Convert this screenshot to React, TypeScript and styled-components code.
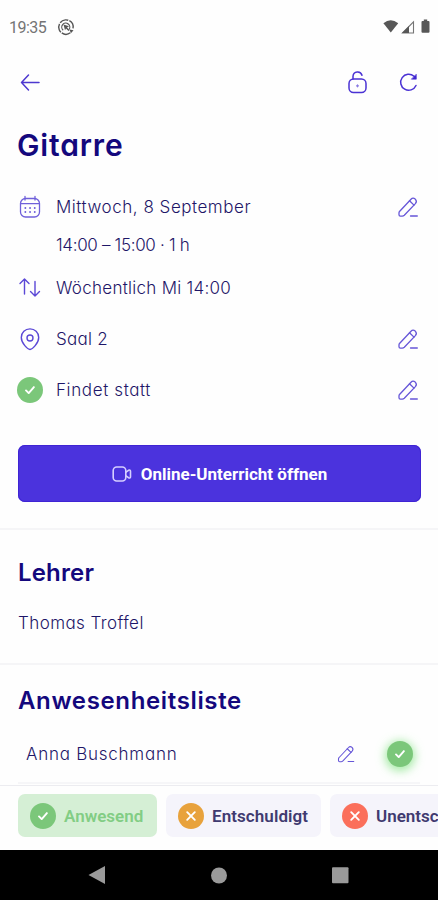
import React from 'react';
import styled, { createGlobalStyle } from 'styled-components';

const GlobalStyle = createGlobalStyle`
  * { box-sizing: border-box; }
  body { margin: 0; background: #fefefe; }
  button { border: 0; background: none; padding: 0; margin: 0; font: inherit; }
  svg { display: block; flex: none; overflow: visible; }
`;

const Screen = styled.div`
  width: 438px;
  height: 900px;
  display: flex;
  flex-direction: column;
  overflow: hidden;
  background: #fefefe;
  color: #1e1668;
  font-family: Inter, 'Open Sans', sans-serif;
  font-feature-settings: 'cv11' 1;
  white-space: nowrap;
`;

const StatusBar = styled.div`
  height: 54px;
  flex: none;
  display: flex;
  align-items: center;
  padding: 0 7px 0 9px;
  color: #747474;
  font: 400 16px Roboto, sans-serif;
  letter-spacing: -0.5px;
`;

const StatusIcon = styled.span`
  margin-left: 12px;
`;

const StatusRight = styled.div`
  margin-left: auto;
  display: flex;
  align-items: center;
`;

const AppBar = styled.header`
  height: 56px;
  flex: none;
  display: flex;
  align-items: center;
  justify-content: space-between;
  padding: 0 18px;
`;

const Actions = styled.div`
  display: flex;
  gap: 27px;
`;

const IconButton = styled.button`
  width: 24px;
  height: 24px;
  display: grid;
  place-items: center;
`;

const Content = styled.main`
  flex: 1;
  min-height: 0;
  overflow: hidden;
`;

const Title = styled.h1<{ $spacing: number }>`
  margin: 0;
  height: 72px;
  padding: 0 17px;
  font-size: 30px;
  line-height: 70px;
  font-weight: 600;
  color: #14087d;
  letter-spacing: ${(p) => p.$spacing}px;
`;

const Row = styled.div<{ $height: number }>`
  height: ${(p) => p.$height}px;
  display: grid;
  grid-template-columns: 24px 1fr 24px;
  column-gap: 14px;
  align-items: center;
  justify-items: start;
  padding: 0 18px;
`;

const Text = styled.span<{ $spacing: number }>`
  font-size: 17px;
  line-height: 26px;
  font-weight: 300;
  letter-spacing: ${(p) => p.$spacing}px;
`;

const PrimaryButton = styled.button`
  display: flex;
  align-items: center;
  justify-content: center;
  gap: 9px;
  width: 403px;
  height: 57px;
  margin: 25px 17px 26px 18px;
  border-radius: 7px;
  background: #4b33dd;
  box-shadow: inset 0 0 0 1px #3f24d4;
  color: #fff;
  font: 700 17px Roboto, sans-serif;
`;

const ButtonLabel = styled.span`
  letter-spacing: 0;
`;

const Section = styled.section<{ $height: number; $top: number }>`
  height: ${(p) => p.$height}px;
  padding: ${(p) => p.$top}px 18px 0;
  border-top: 2px solid #f5f5f7;
`;

const Heading = styled.h2<{ $spacing: number }>`
  margin: 0 0 21px;
  font-size: 24px;
  line-height: 32px;
  font-weight: 600;
  color: #14087d;
  letter-spacing: ${(p) => p.$spacing}px;
`;

const Attendee = styled.div`
  height: 60px;
  margin-top: -14px;
  display: flex;
  align-items: center;
  padding: 2px 7px 0 8px;
  border-bottom: 2px solid #f6f6f8;
`;

const AttendeeTools = styled.div`
  margin-left: auto;
  display: flex;
  align-items: center;
  gap: 31px;
`;

const badgeColors = { present: '#7bc77a', excused: '#e8a23c', absent: '#fb6f5b' };
type Kind = keyof typeof badgeColors;

const Circle = styled.span<{ $kind: Kind; $glow?: boolean }>`
  width: 26px;
  height: 26px;
  flex: none;
  display: grid;
  place-items: center;
  border-radius: 50%;
  background: ${(p) => badgeColors[p.$kind]};
  box-shadow: ${(p) => (p.$glow ? '0 2px 10px 2px rgba(105, 222, 105, 0.6)' : 'none')};
`;

const RowBadge = styled.span`
  margin-left: -1px;
`;

const FilterBar = styled.div`
  height: 65px;
  flex: none;
  display: flex;
  gap: 9px;
  padding: 8px 0 0 18px;
  border-top: 1px solid #ececf0;
  overflow: hidden;
`;

const Chip = styled.button<{ $active?: boolean; $width: number }>`
  flex: none;
  width: ${(p) => p.$width}px;
  height: 43px;
  display: flex;
  align-items: center;
  gap: 8px;
  padding-left: 12px;
  border-radius: 7px;
  background: ${(p) => (p.$active ? '#d5efd5' : '#f5f4fb')};
  color: ${(p) => (p.$active ? '#82cd84' : '#403a70')};
  font: 600 17px Roboto, sans-serif;
`;

const ChipLabel = styled.span<{ $spacing: number }>`
  letter-spacing: ${(p) => p.$spacing}px;
`;

const NavBar = styled.nav`
  height: 50px;
  flex: none;
  display: flex;
  align-items: center;
  justify-content: space-between;
  padding: 0 89px 0 88px;
  background: #000;
`;

const line = {
  fill: 'none',
  stroke: '#4d38cf',
  strokeWidth: 1.3,
  strokeLinecap: 'round' as const,
  strokeLinejoin: 'round' as const,
};

const BackIcon = () => (
  <svg width="24" height="24" viewBox="0 0 24 24" {...line} strokeWidth={1.5}>
    <path d="M21 12.500H3.500M10.500 5 3.500 12.500 10.500 20" />
  </svg>
);

const UnlockIcon = () => (
  <svg width="24" height="24" viewBox="0 0 24 24" {...line} stroke="#4a32d4" strokeWidth={1.500}>
    <rect x="4" y="9" width="17" height="13.500" rx="4.500" />
    <path d="M8 9V6.200a4.600 4.600 0 0 1 9-.9" />
    <path d="M11.500 15.800h2M12.500 14.800v2" strokeWidth="1.200" opacity=".65" />
  </svg>
);

const RefreshIcon = () => (
  <svg width="24" height="24" viewBox="0 0 24 24" {...line} stroke="#4a32d4" strokeWidth={1.500}>
    <path d="M20 15.500a8 8 0 1 1-2-9.200L19.500 8" />
    <path d="M20.300 4.500v4.700h-4.700Z" fill="#3f24d0" strokeWidth=".6" />
  </svg>
);

const CalendarIcon = () => (
  <svg width="24" height="24" viewBox="0 0 24 24" {...line} stroke="#6f60da">
    <rect x="2.500" y="3.500" width="19" height="18.500" rx="5" />
    <path d="M3 8.700h18M7 1.500V5M17 1.500V5" />
    <path d="M7.300 13h.1M12 13h.1M16.700 13h.1M7.300 17h.1M12 17h.1M16.700 17h.1" strokeWidth="1.800" />
  </svg>
);

const RepeatIcon = () => (
  <svg width="24" height="24" viewBox="0 0 24 24" {...line} stroke="#5b48d6" strokeWidth={1.400}>
    <path d="M6.500 18V3M2 7.500 6.500 3 11 7.500M17 5.500V20M12.500 15.500 17 20l4.500-4.500" />
  </svg>
);

const PinIcon = () => (
  <svg width="24" height="24" viewBox="0 0 24 24" {...line} stroke="#5b48d6" strokeWidth={1.400}>
    <path d="M12 22.500c-2.200 0-8.700-6.200-8.700-12C3.300 5.500 7.200 1.900 12 1.900s8.700 3.600 8.700 8.600c0 5.800-6.500 12-8.700 12Z" />
    <circle cx="12" cy="11" r="3" />
  </svg>
);

const PencilIcon = ({ size = 24 }: { size?: number }) => (
  <svg width={size} height={size} viewBox="0 0 24 24" {...line} stroke="#6656d8">
    <path d="M3.500 16.500 15 4.200q2-2.100 4.200-.1 2.200 2.200.2 4.500L8.300 20.300Q7.400 21.200 6.200 21.200H4.400Q3 21.200 3 19.800V18Q3 17 3.500 16.500Z" />
    <path d="m13.500 5.700 4.500 4.400M14.500 21h6.800" />
  </svg>
);

const VideoIcon = () => (
  <svg width="20" height="18" viewBox="0 0 20 18" {...line} stroke="#d6cfff" strokeWidth={1.600}>
    <rect x="1.200" y="2" width="12.600" height="14" rx="3.500" />
    <path d="M14 7.200 16.500 5.300q2-.8 2 1v5.400q0 1.800-2 1L14 10.800" />
  </svg>
);

const CheckIcon = () => (
  <svg width="26" height="26" viewBox="0 0 26 26" {...line} stroke="#fff" strokeWidth={1.900}>
    <path d="m9 13.400 2.700 2.700 5.200-6" />
  </svg>
);

const CrossIcon = () => (
  <svg width="26" height="26" viewBox="0 0 26 26" {...line} stroke="#fff" strokeWidth={1.900}>
    <path d="m9.200 9.200 7.600 7.600M16.800 9.200l-7.600 7.600" />
  </svg>
);

const Badge = ({ kind, glow }: { kind: Kind; glow?: boolean }) => (
  <Circle $kind={kind} $glow={glow}>
    {kind === 'present' ? <CheckIcon /> : <CrossIcon />}
  </Circle>
);

const Edit = () => (
  <IconButton aria-label="Bearbeiten">
    <PencilIcon />
  </IconButton>
);

export default function App() {
  return (
    <>
      <GlobalStyle />
      <Screen>
        <StatusBar>
          19:35
          <StatusIcon>
            <svg width="16" height="16" viewBox="0 0 16 16" fill="none" stroke="#555" strokeWidth="1.400">
              <path d="M12.300 13.800A7.200 7.200 0 1 1 15 9.500" strokeDasharray="9 1.200" />
              <path d="M5.200 11.200A4 4 0 1 1 11 10.500" strokeWidth="1.200" />
              <path d="m5.500 5.500 5.500 1.800-2 1.200 2.500 2.500-1 1L8 9.500l-1 1.800Z" fill="#555" stroke="none" />
              <path d="m11.500 10.500 4 .8-2.600 3Z" fill="#555" stroke="none" />
            </svg>
          </StatusIcon>
          <StatusRight>
            <svg width="48" height="16" viewBox="0 0 48 16" fill="#575757">
              <path d="M.4 4.200Q7.700-1.500 15.200 4.200L7.800 13.500Z" />
              <path d="M19.500 14 30.500 2.800v11.200Z" fill="none" stroke="#757575" strokeWidth="1.100" />
              <path d="m19 14 7-7v7Z" />
              <path d="M40.800.5h3.400V2h1.300q1 0 1 1v9.800q0 1-1 1h-6q-1 0-1-1V3q0-1 1-1h1.300Z" />
            </svg>
          </StatusRight>
        </StatusBar>
        <AppBar>
          <IconButton aria-label="Zurück"><BackIcon /></IconButton>
          <Actions>
            <IconButton aria-label="Entsperren"><UnlockIcon /></IconButton>
            <IconButton aria-label="Aktualisieren"><RefreshIcon /></IconButton>
          </Actions>
        </AppBar>
        <Content>
          <Title $spacing={0.85}>Gitarre</Title>
          <Row $height={50}>
            <CalendarIcon />
            <Text $spacing={0.53}>Mittwoch, 8 September</Text>
            <Edit />
          </Row>
          <Row $height={26}>
            <span />
            <Text $spacing={-0.33}>14:00 – 15:00 · 1 h</Text>
          </Row>
          <Row $height={59}>
            <RepeatIcon />
            <Text $spacing={0.28}>Wöchentlich Mi 14:00</Text>
          </Row>
          <Row $height={43}>
            <PinIcon />
            <Text $spacing={0.25}>Saal 2</Text>
            <Edit />
          </Row>
          <Row $height={59}>
            <RowBadge><Badge kind="present" /></RowBadge>
            <Text $spacing={0.62}>Findet statt</Text>
            <Edit />
          </Row>
          <Row $height={1} as="div" />
          <PrimaryButton>
            <VideoIcon />
            <ButtonLabel>Online-Unterricht öffnen</ButtonLabel>
          </PrimaryButton>
          <Section $height={135} $top={27}>
            <Heading $spacing={0.15}>Lehrer</Heading>
            <Text $spacing={0.42}>Thomas Troffel</Text>
          </Section>
          <Section $height={122} $top={20}>
            <Heading $spacing={0.64}>Anwesenheitsliste</Heading>
            <Attendee>
              <Text $spacing={0.75}>Anna Buschmann</Text>
              <AttendeeTools>
                <PencilIcon size={20} />
                <Badge kind="present" glow />
              </AttendeeTools>
            </Attendee>
          </Section>
        </Content>
        <FilterBar>
          <Chip $active $width={139}>
            <Badge kind="present" />
            <ChipLabel $spacing={0}>Anwesend</ChipLabel>
          </Chip>
          <Chip $width={155}>
            <Badge kind="excused" />
            <ChipLabel $spacing={0.08}>Entschuldigt</ChipLabel>
          </Chip>
          <Chip $width={176}>
            <Badge kind="absent" />
            <ChipLabel $spacing={0}>Unentschuldigt</ChipLabel>
          </Chip>
        </FilterBar>
        <NavBar>
          <svg width="17" height="18" viewBox="0 0 17 18" fill="#9a9a9a"><path d="M17 0v18L.5 9Z" /></svg>
          <svg width="17" height="17" viewBox="0 0 17 17" fill="#9a9a9a"><circle cx="9" cy="8.500" r="8" /></svg>
          <svg width="17" height="17" viewBox="0 0 17 17" fill="#9a9a9a"><rect x="0" y=".2" width="16.500" height="16" rx="1" /></svg>
        </NavBar>
      </Screen>
    </>
  );
}
